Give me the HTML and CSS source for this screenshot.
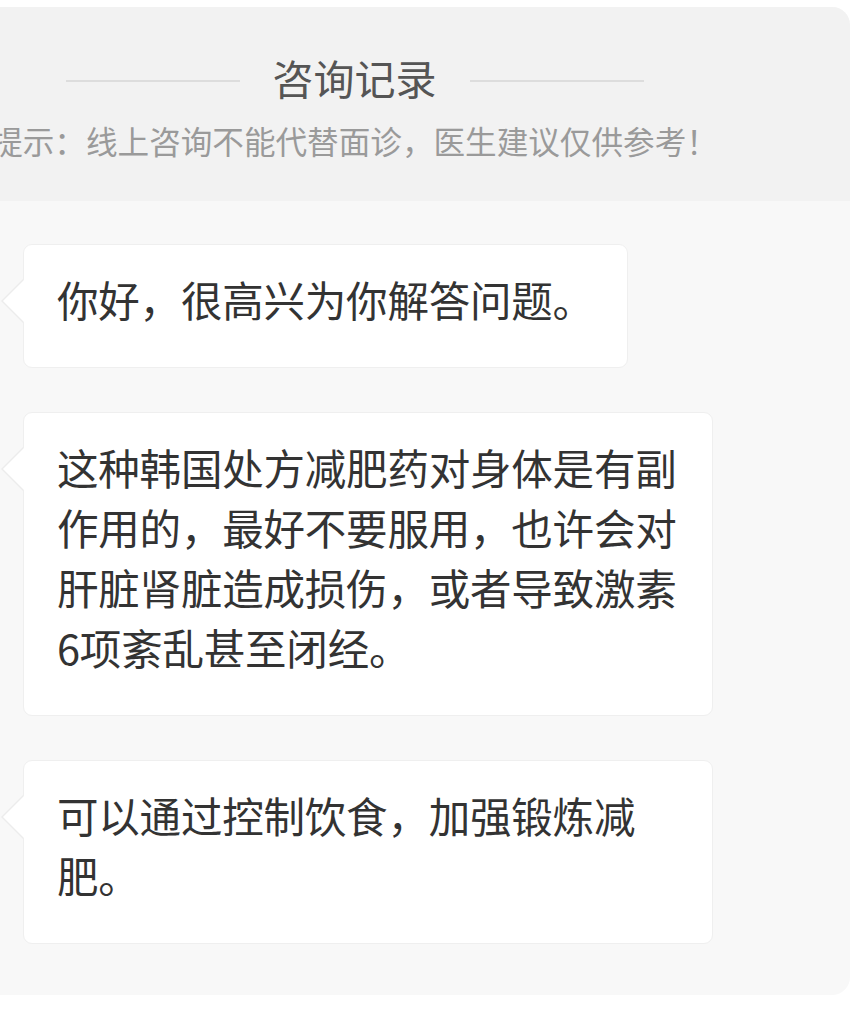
FILE: index.html
```html
<!DOCTYPE html>
<html lang="zh-CN">
<head>
<meta charset="utf-8">
<title>咨询记录</title>
<link rel="stylesheet" href="styles.css">
</head>
<body>
<div class="page">
  <section class="card">
    <header class="card-head">
      <div class="title-row">
        <span class="rule"></span>
        <h1 class="title">咨询记录</h1>
        <span class="rule"></span>
      </div>
      <p class="notice">提示：线上咨询不能代替面诊，医生建议仅供参考！</p>
    </header>
    <div class="card-body">
      <div class="bubble">你好，很高兴为你解答问题。</div>
      <div class="bubble">这种韩国处方减肥药对身体是有副作用的，最好不要服用，也许会对肝脏肾脏造成损伤，或者导致激素6项紊乱甚至闭经。</div>
      <div class="bubble">可以通过控制饮食，加强锻炼减肥。</div>
    </div>
  </section>
</div>
</body>
</html>
```

FILE: styles.css
```css
html, body {
  margin: 0;
  padding: 0;
  background: #ffffff;
  overflow: hidden;
}

body {
  font-family: "Noto Sans CJK SC", "Noto Sans", sans-serif;
  width: 864px;
  height: 1022px;
}

.page {
  padding-top: 7px;
}

.card {
  margin: 0 14px 0 -141px;
  border-radius: 0 18px 18px 0;
  overflow: hidden;
  background: #f8f8f8;
}

.card-head {
  background: #f2f2f2;
  height: 194px;
  box-sizing: border-box;
  padding-top: 40px;
  display: flex;
  flex-direction: column;
  align-items: center;
}

.title-row {
  display: flex;
  align-items: center;
  gap: 33px;
  height: 60px;
}

.rule {
  width: 174px;
  height: 2px;
  margin-top: 8px;
  background: #dddddd;
}

.title {
  margin: 0;
  font-size: 41px;
  font-weight: 400;
  line-height: 60px;
  color: #555555;
}

.notice {
  margin: 9px 0 0;
  font-size: 31.6px;
  line-height: 48px;
  color: #9a9a9a;
  white-space: nowrap;
}

.card-body {
  padding: 43px 0 51px 164px;
  display: flex;
  flex-direction: column;
  align-items: flex-start;
  gap: 44px;
}

.bubble {
  position: relative;
  box-sizing: border-box;
  max-width: 690px;
  padding: 24px 33px 38px;
  background: #ffffff;
  border: 1px solid #efefef;
  border-radius: 9px;
  font-size: 41.5px;
  letter-spacing: -0.2px;
  line-height: 60px;
  color: #333333;
}

.bubble::before,
.bubble::after {
  content: "";
  position: absolute;
  top: 34px;
  width: 0;
  height: 0;
  border-top: 22px solid transparent;
  border-bottom: 22px solid transparent;
}

.bubble::before {
  left: -23px;
  border-right: 22px solid #ececec;
}

.bubble::after {
  left: -21px;
  border-right: 22px solid #ffffff;
}
```
